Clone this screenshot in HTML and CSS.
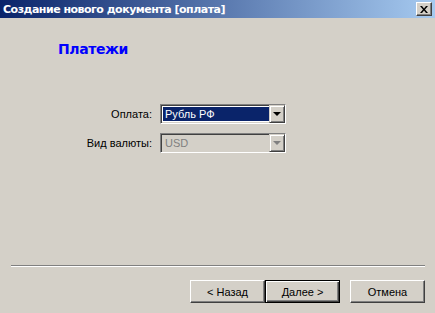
FILE: index.html
```html
<!doctype html>
<html lang="ru">
  <head>
    <meta charset="UTF-8" />
    <title>Создание нового документа [оплата]</title>
    <link rel="stylesheet" href="styles.css">
  </head>
  <body>
    <div class="wizard">
      <!-- Caption -->
      <div class="caption">
        <span class="caption-text">Создание нового документа [оплата]</span>
        <div class="caption-button">
          <svg width="8" height="7" viewBox="0 0 8 7">
            <path d="M0 0h2l2 2.5 2-2.5h2l-3 3.5 3 3.5h-2l-2-2.5-2 2.5h-2l3-3.5z" fill="#000" />
          </svg>
        </div>
      </div>

      <!-- Page -->
      <div class="page">
        <div class="page-title">Платежи</div>

        <div class="form-grid">
          <label class="form-label">Оплата:</label>
          <div class="combo">
            <div class="combo-field"><span class="combo-value selected">Рубль РФ</span></div>
            <div class="combo-button"><span class="arrow"></span></div>
          </div>

          <label class="form-label">Вид валюты:</label>
          <div class="combo disabled">
            <div class="combo-field"><span class="combo-value">USD</span></div>
            <div class="combo-button"><span class="arrow"></span></div>
          </div>
        </div>
      </div>

      <!-- Buttons -->
      <div class="footer">
        <div class="separator"></div>
        <div class="button-row">
          <button class="win-button">&lt; Назад</button>
          <button class="win-button default">Далее &gt;</button>
          <button class="win-button cancel">Отмена</button>
        </div>
      </div>
    </div>
  </body>
</html>
```

FILE: styles.css
```css
/* Classic wizard dialog */
:root {
  --face: #d4d0c8;
  --shadow: #808080;
  --dark: #404040;
  --navy: #0a246a;
  --caption-end: #a6caf0;
}

body {
  margin: 0;
  font-family: 'Liberation Sans', Arial, sans-serif;
  font-size: 11px;
  color: #000;
  background: var(--face);
}

.wizard {
  height: 313px;
  display: flex;
  flex-direction: column;
}

.caption {
  height: 18px;
  display: flex;
  align-items: center;
  justify-content: space-between;
  padding: 0 3px 0 3px;
  background: linear-gradient(90deg, var(--navy), var(--caption-end));
}

.caption-text {
  color: #fff;
  font-family: 'DejaVu Sans', Verdana, sans-serif;
  font-weight: bold;
  font-size: 11px;
  letter-spacing: -0.5px;
}

.caption-button {
  width: 16px;
  height: 14px;
  box-sizing: border-box;
  background: var(--face);
  border: 1px solid;
  border-color: #fff var(--dark) var(--dark) #fff;
  box-shadow: inset -1px -1px 0 var(--shadow);
  display: flex;
  align-items: center;
  justify-content: center;
}

.page {
  flex: 1;
  padding: 23px 0 0 58px;
}

.page-title {
  color: #0000ff;
  font-family: 'DejaVu Sans', Verdana, sans-serif;
  font-weight: bold;
  font-size: 14px;
  letter-spacing: -0.4px;
  height: 17px;
}

.form-grid {
  margin: 46px 0 0 0;
  display: grid;
  grid-template-columns: 94px 126px;
  column-gap: 8px;
  row-gap: 9px;
  align-items: center;
}

.form-label {
  text-align: right;
}

.combo {
  height: 20px;
  box-sizing: border-box;
  display: flex;
  border: 1px solid;
  border-color: var(--shadow) #fff #fff var(--shadow);
  box-shadow: inset 1px 1px 0 var(--dark), inset -1px -1px 0 var(--face);
  padding: 2px;
  background: #fff;
}

.combo-field {
  flex: 1;
  display: flex;
}

.combo-value {
  flex: 1;
  padding-left: 2px;
  line-height: 14px;
}

.combo-value.selected {
  background: var(--navy);
  color: #fff;
}

.combo.disabled {
  background: var(--face);
}

.combo.disabled .combo-value {
  color: #808080;
}

.combo-button {
  width: 16px;
  box-sizing: border-box;
  margin: -2px -2px -2px 0;
  background: var(--face);
  border: 1px solid;
  border-color: var(--face) var(--dark) var(--dark) var(--face);
  box-shadow: inset 1px 1px 0 #fff, inset -1px -1px 0 var(--shadow);
  display: flex;
  align-items: center;
  justify-content: center;
}

.arrow {
  width: 0;
  height: 0;
  border-left: 4px solid transparent;
  border-right: 4px solid transparent;
  border-top: 4px solid #000;
}

.combo.disabled .arrow {
  border-top-color: var(--shadow);
}

.footer {
  padding: 0 10px 10px 11px;
}

.separator {
  border-top: 1px solid var(--shadow);
  border-bottom: 1px solid #fff;
  height: 0;
  margin-bottom: 13px;
}

.button-row {
  display: flex;
  justify-content: flex-end;
}

.win-button {
  width: 75px;
  height: 23px;
  box-sizing: border-box;
  font-family: 'Liberation Sans', Arial, sans-serif;
  font-size: 11px;
  color: #000;
  background: var(--face);
  border: 1px solid;
  border-color: #fff var(--dark) var(--dark) #fff;
  box-shadow: inset -1px -1px 0 var(--shadow);
  padding: 0;
}

.win-button.default {
  border: 1px solid #000;
  box-shadow: inset 1px 1px 0 #fff, inset -1px -1px 0 var(--dark), inset -2px -2px 0 var(--shadow);
}

.win-button.cancel {
  margin-left: 10px;
}
```
